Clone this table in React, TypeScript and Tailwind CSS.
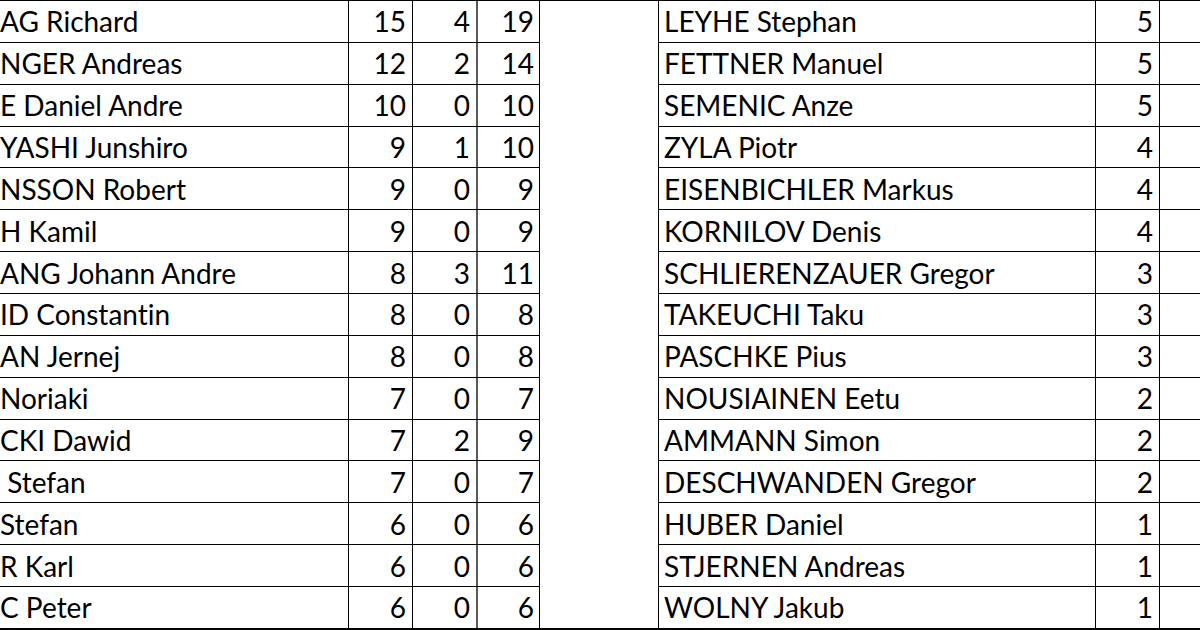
const leftRows: [string, string, number, number, number][] = [
  ['FREIT', 'AG Richard', 15, 4, 19],
  ['WELLI', 'NGER Andreas', 12, 2, 14],
  ['TAND', 'E Daniel Andre', 10, 0, 10],
  ['KOBA', 'YASHI Junshiro', 9, 1, 10],
  ['JOHA', 'NSSON Robert', 9, 0, 9],
  ['STOC', 'H Kamil', 9, 0, 9],
  ['FORF', 'ANG Johann Andre', 8, 3, 11],
  ['SCHM', 'ID Constantin', 8, 0, 8],
  ['DAMJ', 'AN Jernej', 8, 0, 8],
  ['KASAI ', 'Noriaki', 7, 0, 7],
  ['KUBA', 'CKI Dawid', 7, 2, 9],
  ['KRAFT', ' Stefan', 7, 0, 7],
  ['HULA ', 'Stefan', 6, 0, 6],
  ['GEIGE', 'R Karl', 6, 0, 6],
  ['PREV', 'C Peter', 6, 0, 6],
]

const rightRows: [string, number][] = [
  ['LEYHE Stephan', 5],
  ['FETTNER Manuel', 5],
  ['SEMENIC Anze', 5],
  ['ZYLA Piotr', 4],
  ['EISENBICHLER Markus', 4],
  ['KORNILOV Denis', 4],
  ['SCHLIERENZAUER Gregor', 3],
  ['TAKEUCHI Taku', 3],
  ['PASCHKE Pius', 3],
  ['NOUSIAINEN Eetu', 2],
  ['AMMANN Simon', 2],
  ['DESCHWANDEN Gregor', 2],
  ['HUBER Daniel', 1],
  ['STJERNEN Andreas', 1],
  ['WOLNY Jakub', 1],
]

function Num({ value, className = '' }: { value: number; className?: string }) {
  return (
    <div className={`w-[64px] shrink-0 flex items-center justify-end pr-[6px] border-l border-black ${className}`}>
      {value}
    </div>
  )
}

export default function App() {
  return (
    <div
      className="w-[1200px] h-[630px] bg-white overflow-hidden flex border-t border-b-2 border-black text-black text-[28px] leading-none [font-variant-ligatures:none]"
      style={{ fontFamily: 'Lato, "Open Sans", sans-serif' }}
    >
      {/* left table, first column cut by the window edge */}
      <div className="w-[540px] shrink-0 flex flex-col border-r border-black">
        {leftRows.map(([hidden, shown, a, b, total], i) => (
          <div
            key={i}
            className={`flex-1 flex ${i < leftRows.length - 1 ? 'border-b border-black' : ''}`}
          >
            <div className="w-[348px] shrink-0 flex items-center whitespace-pre">
              <span className="w-0 flex justify-end">
                <span>{hidden}</span>
              </span>
              <span>{shown}</span>
            </div>
            <Num value={a} />
            <Num value={b} />
            <Num value={total} className="border-l-2 border-l-[#5a5a5a] w-[63px]" />
          </div>
        ))}
      </div>

      <div className="w-[118px] shrink-0" />

      {/* right table */}
      <div className="flex-1 flex flex-col border-l border-black">
        {rightRows.map(([name, pts], i) => (
          <div
            key={i}
            className={`flex-1 flex ${i < rightRows.length - 1 ? 'border-b border-black' : ''}`}
          >
            <div className="w-[436px] shrink-0 flex items-center pl-[5px] whitespace-nowrap">{name}</div>
            <Num value={pts} />
            <div className="flex-1 border-l border-black" />
          </div>
        ))}
      </div>
    </div>
  )
}
